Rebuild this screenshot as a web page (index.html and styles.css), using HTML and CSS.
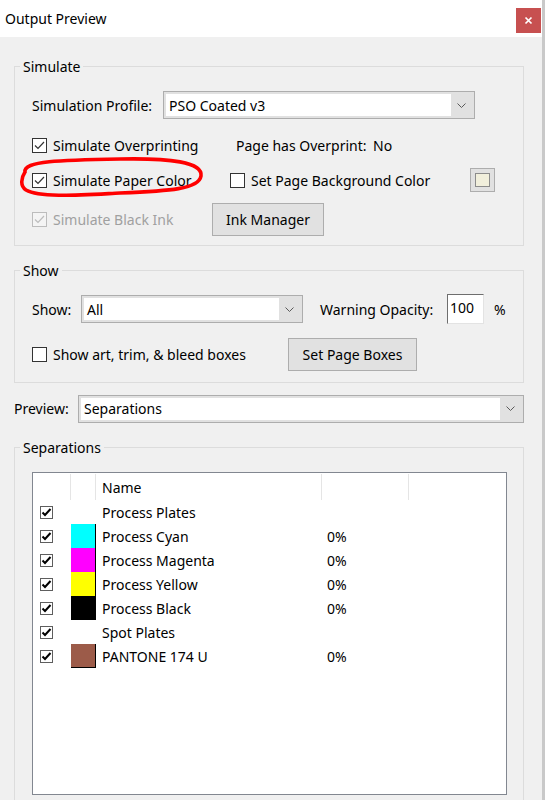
FILE: index.html
```html
<!DOCTYPE html>
<html lang="en">
<head>
    <meta charset="UTF-8">
    <title>Output Preview</title>
    <link rel="stylesheet" href="styles.css">
</head>
<body>
    <div class="window">
        <div class="titlebar">
            <span class="title">Output Preview</span>
            <button class="close-btn" aria-label="Close">
                <svg width="9" height="9" viewBox="0 0 9 9"><path d="M1.5 1.5L7.5 7.5M7.5 1.5L1.5 7.5" stroke="#fff" stroke-width="1.7"/></svg>
            </button>
        </div>

        <div class="content">
            <!-- Simulate -->
            <div class="group group-simulate">
                <div class="group-title">Simulate</div>

                <div class="row row-profile">
                    <span class="label-profile">Simulation Profile:</span>
                    <div class="select select-profile">
                        <span class="select-value">PSO Coated v3</span>
                        <span class="select-arrow"><svg width="9" height="5" viewBox="0 0 9 5"><polyline points="0.5,0.5 4.5,4.5 8.5,0.5" fill="none" stroke="#5a5a5a"/></svg></span>
                    </div>
                </div>

                <div class="row row-overprint">
                    <label class="check col-overprint">
                        <span class="box"><svg viewBox="0 0 13 13"><polyline points="2,6.5 5,9.5 11,3" fill="none" stroke="#333" stroke-width="1.2"/></svg></span>
                        Simulate Overprinting
                    </label>
                    <span class="label-overprint">Page has Overprint:</span>
                    <span>No</span>
                </div>

                <div class="row row-paper">
                    <label class="check col-paper">
                        <span class="box"><svg viewBox="0 0 13 13"><polyline points="2,6.5 5,9.5 11,3" fill="none" stroke="#333" stroke-width="1.2"/></svg></span>
                        Simulate Paper Color
                    </label>
                    <label class="check col-bg">
                        <span class="box"></span>
                        Set Page Background Color
                    </label>
                    <span class="swatch-btn"><span class="swatch-inner"></span></span>
                    <svg class="highlight" width="190" height="44" viewBox="0 0 190 44">
                        <path d="M7 16C5 5 42 4 102 3C152 2 185 6 183 20C181 33 152 35 102 37C62 39 22 42 8 34C2 30 3 22 7 16Z" fill="none" stroke="#ff0000" stroke-width="3.6"/>
                    </svg>
                </div>

                <div class="row row-ink">
                    <label class="check check-disabled col-ink">
                        <span class="box"><svg viewBox="0 0 13 13"><polyline points="2,6.5 5,9.5 11,3" fill="none" stroke="#bcbcbc" stroke-width="1.2"/></svg></span>
                        Simulate Black Ink
                    </label>
                    <button class="btn btn-ink">Ink Manager</button>
                </div>
            </div>

            <!-- Show -->
            <div class="group group-show">
                <div class="group-title">Show</div>

                <div class="row row-show">
                    <span class="label-show">Show:</span>
                    <div class="select select-show">
                        <span class="select-value">All</span>
                        <span class="select-arrow"><svg width="9" height="5" viewBox="0 0 9 5"><polyline points="0.5,0.5 4.5,4.5 8.5,0.5" fill="none" stroke="#5a5a5a"/></svg></span>
                    </div>
                    <span class="label-opacity">Warning Opacity:</span>
                    <span class="input-opacity">100</span>
                    <span class="percent">%</span>
                </div>

                <div class="row row-boxes">
                    <label class="check col-boxes">
                        <span class="box"></span>
                        Show art, trim, &amp; bleed boxes
                    </label>
                    <button class="btn btn-boxes">Set Page Boxes</button>
                </div>
            </div>

            <div class="row row-preview">
                <span class="label-preview">Preview:</span>
                <div class="select select-preview">
                    <span class="select-value">Separations</span>
                    <span class="select-arrow"><svg width="9" height="5" viewBox="0 0 9 5"><polyline points="0.5,0.5 4.5,4.5 8.5,0.5" fill="none" stroke="#5a5a5a"/></svg></span>
                </div>
            </div>

            <!-- Separations -->
            <div class="group group-sep">
                <div class="group-title">Separations</div>

                <div class="sep-list">
                    <div class="sep-row sep-head">
                        <span></span>
                        <span></span>
                        <span class="sep-name">Name</span>
                        <span></span>
                        <span class="sep-last"></span>
                    </div>
                    <div class="sep-row">
                        <span class="sep-check"><span class="mini-box"><svg viewBox="0 0 11 11"><polyline points="1.5,5.5 4,8 9.5,2" fill="none" stroke="#000" stroke-width="2"/></svg></span></span>
                        <span></span>
                        <span class="sep-name">Process Plates</span>
                        <span></span>
                    </div>
                    <div class="sep-row">
                        <span class="sep-check"><span class="mini-box"><svg viewBox="0 0 11 11"><polyline points="1.5,5.5 4,8 9.5,2" fill="none" stroke="#000" stroke-width="2"/></svg></span></span>
                        <span class="swatch swatch-cyan"></span>
                        <span class="sep-name">Process Cyan</span>
                        <span class="sep-pct">0%</span>
                    </div>
                    <div class="sep-row">
                        <span class="sep-check"><span class="mini-box"><svg viewBox="0 0 11 11"><polyline points="1.5,5.5 4,8 9.5,2" fill="none" stroke="#000" stroke-width="2"/></svg></span></span>
                        <span class="swatch swatch-magenta"></span>
                        <span class="sep-name">Process Magenta</span>
                        <span class="sep-pct">0%</span>
                    </div>
                    <div class="sep-row">
                        <span class="sep-check"><span class="mini-box"><svg viewBox="0 0 11 11"><polyline points="1.5,5.5 4,8 9.5,2" fill="none" stroke="#000" stroke-width="2"/></svg></span></span>
                        <span class="swatch swatch-yellow"></span>
                        <span class="sep-name">Process Yellow</span>
                        <span class="sep-pct">0%</span>
                    </div>
                    <div class="sep-row">
                        <span class="sep-check"><span class="mini-box"><svg viewBox="0 0 11 11"><polyline points="1.5,5.5 4,8 9.5,2" fill="none" stroke="#000" stroke-width="2"/></svg></span></span>
                        <span class="swatch swatch-black"></span>
                        <span class="sep-name">Process Black</span>
                        <span class="sep-pct">0%</span>
                    </div>
                    <div class="sep-row">
                        <span class="sep-check"><span class="mini-box"><svg viewBox="0 0 11 11"><polyline points="1.5,5.5 4,8 9.5,2" fill="none" stroke="#000" stroke-width="2"/></svg></span></span>
                        <span></span>
                        <span class="sep-name">Spot Plates</span>
                        <span></span>
                    </div>
                    <div class="sep-row">
                        <span class="sep-check"><span class="mini-box"><svg viewBox="0 0 11 11"><polyline points="1.5,5.5 4,8 9.5,2" fill="none" stroke="#000" stroke-width="2"/></svg></span></span>
                        <span class="swatch swatch-pantone"></span>
                        <span class="sep-name">PANTONE 174 U</span>
                        <span class="sep-pct">0%</span>
                    </div>
                </div>
            </div>
        </div>
    </div>
</body>
</html>
```

FILE: styles.css
```css
* {
    box-sizing: border-box;
}

body {
    margin: 0;
    background-color: #f0f0f0;
    color: #000;
    font-family: "Noto Sans", "Open Sans", sans-serif;
    font-size: 14px;
    overflow: hidden;
}

.window {
    width: 545px;
    height: 800px;
    border-right: 3px solid #c9c9c9;
    overflow: hidden;
}

/* title bar */
.titlebar {
    height: 37px;
    background-color: #fff;
    display: flex;
    align-items: center;
    justify-content: space-between;
    padding-left: 5px;
}

.close-btn {
    align-self: flex-start;
    margin-top: 8px;
    margin-right: 1px;
    width: 25px;
    height: 25px;
    padding: 0;
    border: none;
    background-color: #c75050;
    display: flex;
    align-items: center;
    justify-content: center;
}

.content {
    padding-left: 14px;
}

/* group boxes */
.group {
    width: 510px;
    border: 1px solid #dcdcdc;
    padding-left: 17px;
}

.group-title {
    display: table;
    margin: -10px 0 0 -12px;
    padding: 0 3px;
    line-height: 20px;
    background-color: #f0f0f0;
}

.group-simulate {
    margin-top: 29px;
    padding-bottom: 9px;
}

.group-show {
    margin-top: 24px;
    padding-bottom: 11px;
}

.group-sep {
    margin-top: 24px;
    padding-bottom: 30px;
}

.row {
    display: flex;
    align-items: center;
}

.row-profile { margin-top: 14px; height: 28px; }
.row-overprint { margin-top: 12px; height: 28px; }
.row-paper { margin-top: 7px; height: 28px; position: relative; }
.row-ink { margin-top: 9px; height: 33px; }
.row-show { margin-top: 13px; height: 30px; }
.row-boxes { margin-top: 14px; height: 33px; }
.row-preview { margin-top: 11px; height: 29px; }

.label-profile { width: 131px; }
.label-overprint { width: 137px; }
.label-show { width: 49px; }
.label-preview { width: 64px; }

.label-opacity {
    margin-left: 17px;
    width: 127px;
}

.col-overprint { width: 204px; }
.col-paper { width: 198px; }
.col-bg { width: 240px; }
.col-ink { width: 180px; }
.col-boxes { width: 256px; }

/* dropdowns */
.select {
    display: flex;
    height: 28px;
    border: 1px solid #adadad;
    background-color: #e1e1e1;
    padding: 2px;
}

.select-profile { width: 312px; }
.select-show { width: 222px; }
.select-preview { width: 446px; }

.select-value {
    flex: 1;
    background-color: #fff;
    padding-left: 3px;
    display: flex;
    align-items: center;
}

.select-arrow {
    width: 21px;
    display: flex;
    align-items: center;
    justify-content: center;
}

/* checkboxes */
.check {
    display: flex;
    align-items: center;
}

.box {
    width: 15px;
    height: 15px;
    flex-shrink: 0;
    margin-right: 6px;
    border: 1px solid #333;
    background-color: #fff;
    display: flex;
    align-items: center;
    justify-content: center;
}

.box svg {
    width: 13px;
    height: 13px;
}

.check-disabled {
    color: #a0a0a0;
}

.check-disabled .box {
    border-color: #bcbcbc;
    background-color: #f4f4f4;
}

.swatch-btn {
    width: 25px;
    height: 24px;
    border: 1px solid #adadad;
    background-color: #e1e1e1;
    padding: 4px;
}

.swatch-inner {
    display: block;
    width: 100%;
    height: 100%;
    background-color: #f1efdc;
    border: 1px solid #8c8c8c;
}

.highlight {
    position: absolute;
    left: -14px;
    top: -10px;
    pointer-events: none;
}

/* buttons and inputs */
.btn {
    height: 33px;
    padding: 0;
    border: 1px solid #adadad;
    background-color: #e1e1e1;
    color: #000;
    font: inherit;
}

.btn-ink { width: 112px; }
.btn-boxes { width: 129px; }

.input-opacity {
    width: 37px;
    height: 30px;
    border: 1px solid;
    border-color: #6e6e6e #e3e3e3 #e3e3e3 #6e6e6e;
    background-color: #fff;
    padding: 0 0 3px 2px;
    display: flex;
    align-items: center;
}

.percent {
    margin-left: 10px;
}

/* separations list */
.sep-list {
    margin-top: 14px;
    width: 475px;
    height: 323px;
    border: 1px solid #828790;
    background-color: #fff;
}

.sep-row {
    display: grid;
    grid-template-columns: 38px 25px 226px 87px 1fr;
    height: 24px;
    align-items: center;
}

.sep-head {
    height: 27px;
    align-items: stretch;
    padding-top: 1px;
}

.sep-head span {
    display: flex;
    align-items: center;
    border-right: 1px solid #e5e5e5;
}

.sep-head .sep-last {
    border-right: none;
}

.sep-name {
    padding-left: 6px;
    white-space: nowrap;
}

.sep-pct {
    padding-left: 5px;
}

.sep-check {
    padding-left: 7px;
    display: flex;
}

.mini-box {
    width: 13px;
    height: 13px;
    border: 1px solid #5e5e5e;
    background-color: #fff;
    display: flex;
    align-items: center;
    justify-content: center;
}

.mini-box svg {
    width: 11px;
    height: 11px;
}

.swatch {
    height: 24px;
    border-right: 1px solid #000;
}

.swatch-cyan { background-color: #00ffff; }
.swatch-magenta { background-color: #ff00ff; }
.swatch-yellow { background-color: #ffff00; }
.swatch-black { background-color: #000; }

.swatch-pantone {
    background-color: #9c5b49;
    border-bottom: 1px solid #000;
}
```
